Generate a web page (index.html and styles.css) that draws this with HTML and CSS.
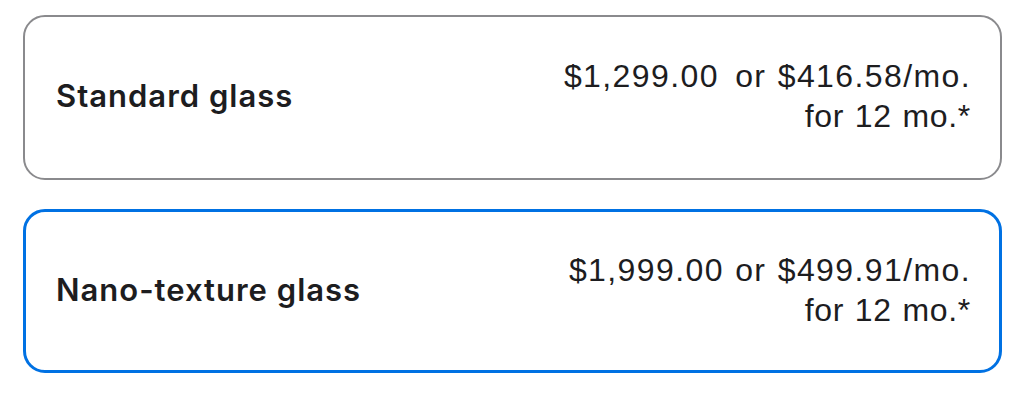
FILE: index.html
```html
<!DOCTYPE html>
<html>
<head>
    <title>Display glass</title>
    <meta name="viewport" content="width=device-width, initial-scale=1">
    <link rel="stylesheet" href="styles.css">
</head>
<body>
    <div class="options">
        <div class="option">
            <span class="option-name">Standard glass</span>
            <div class="option-price">
                <span class="price-line"><span class="price-full">$1,299.00</span> or $416.58/mo.</span><br>
                <span class="price-term">for 12 mo.*</span>
            </div>
        </div>
        <div class="option selected">
            <span class="option-name">Nano-texture glass</span>
            <div class="option-price">
                <span class="price-line">$1,999.00 or $499.91/mo.</span><br>
                <span class="price-term">for 12 mo.*</span>
            </div>
        </div>
    </div>
</body>
</html>
```

FILE: styles.css
```css
body {
    font-family: Inter, "Liberation Sans", sans-serif;
    background-color: #fff;
    color: #1d1d1f;
    margin: 0;
    padding: 0;
}

.options {
    display: flex;
    flex-direction: column;
    gap: 29px;
    padding: 15px 34px 0 23px;
}

.option {
    display: flex;
    justify-content: space-between;
    align-items: center;
    height: 165px;
    box-sizing: border-box;
    padding: 0 29px 0 31px;
    border: 2px solid #8a8a8d;
    border-radius: 22px;
}

.option.selected {
    height: 164px;
    border: 3px solid #0071e3;
    padding: 0 28px 0 30px;
}

.option-name {
    font-size: 31px;
    font-weight: 600;
    letter-spacing: 1px;
    margin-top: -4px;
}

.option-price {
    font-family: "Liberation Sans", Arial, sans-serif;
    font-size: 32px;
    line-height: 40px;
    word-spacing: 1px;
    text-align: right;
    margin-top: -3px;
}

.price-line {
    letter-spacing: 1.4px;
}

.price-term {
    letter-spacing: 0.7px;
}

.price-full {
    margin-right: 5px;
}
```
